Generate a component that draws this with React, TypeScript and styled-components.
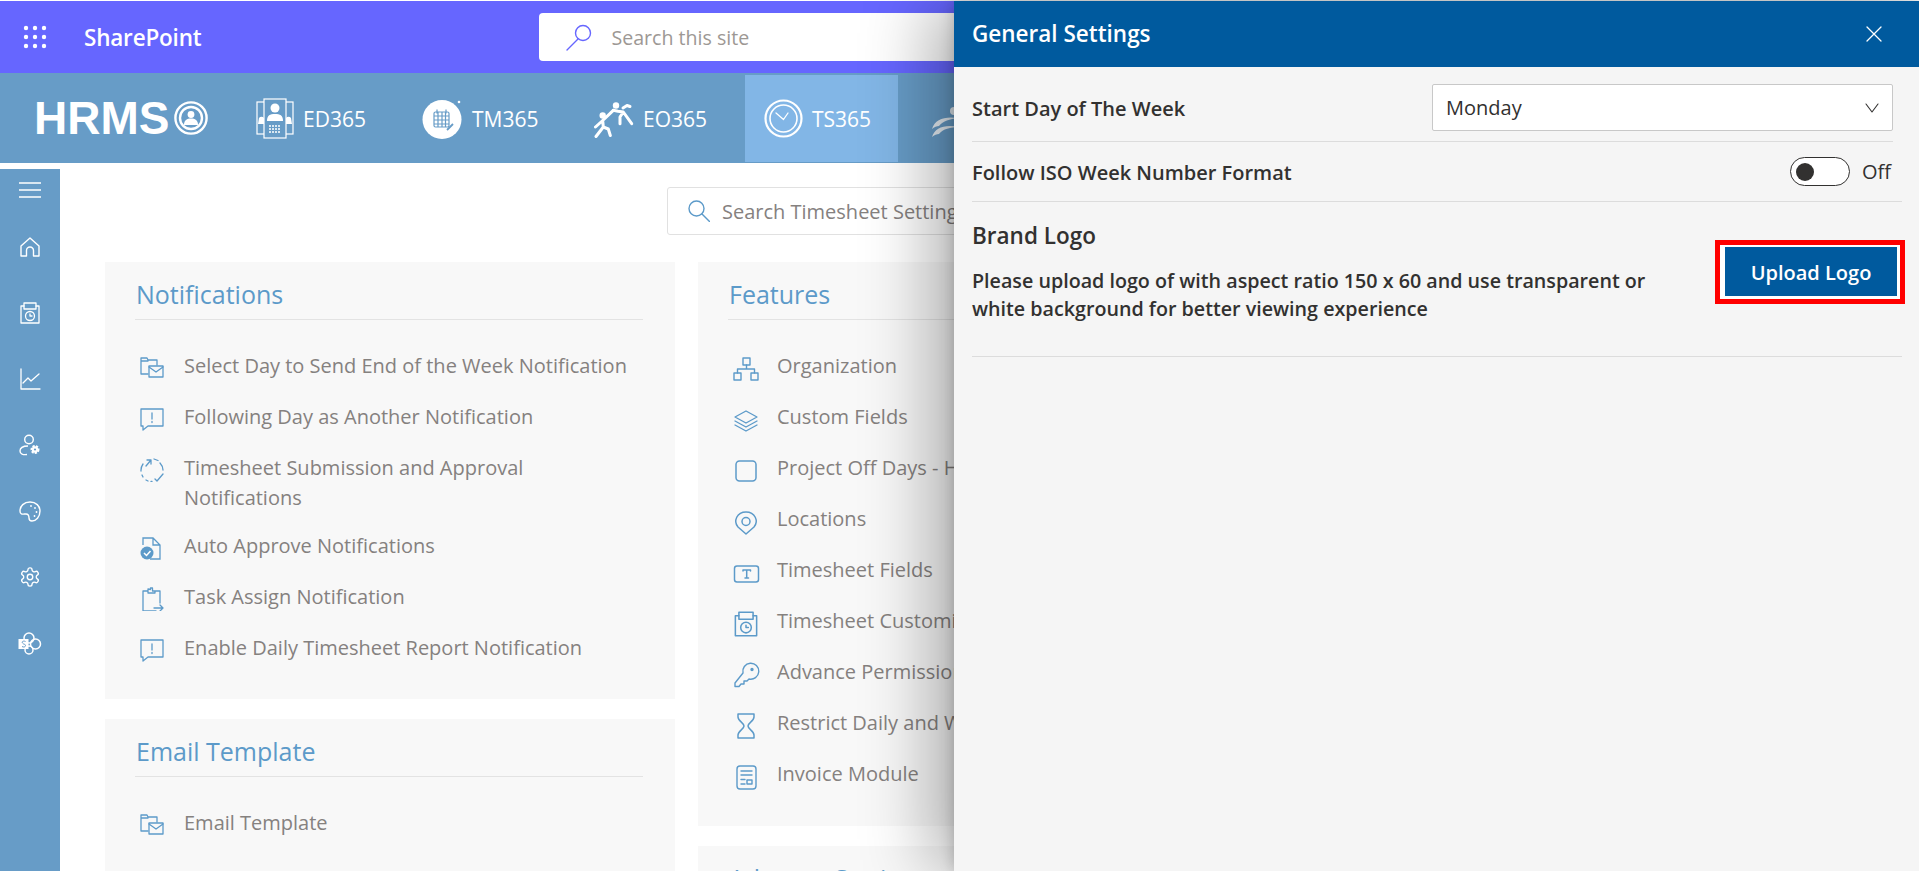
import React from "react";
import styled, { createGlobalStyle } from "styled-components";

const Global = createGlobalStyle`
  html, body { margin: 0; padding: 0; height: 100%; overflow: hidden; background: #fff; }
  body { font-family: "Open Sans", "Liberation Sans", sans-serif; }
  * { box-sizing: border-box; }
`;

const Page = styled.div`
  width: 1919px;
  height: 871px;
  overflow: hidden;
  position: relative;
  padding-top: 1px;
`;
const TopBar = styled.header`
  height: 72px;
  background: #6666ff;
  display: flex;
  align-items: center;
  padding-left: 23px;
  color: #fff;
`;
const Brand = styled.span`
  margin-left: 37px;
  font-size: 22.5px;
  font-weight: 600;
  letter-spacing: -0.2px;
`;
const SiteSearch = styled.div`
  margin-left: 338px;
  width: 600px;
  height: 48px;
  background: #fff;
  border-radius: 4px;
  display: flex;
  align-items: center;
  padding-left: 26px;
  gap: 18px;
  color: #6666ff;
`;
const SiteSearchText = styled.span`
  font-size: 19.6px;
  color: #9d9894;
`;
const NavBar = styled.nav`
  height: 90px;
  background: #679cc7;
  display: flex;
  color: #fff;
`;
const Logo = styled.div`
  width: 237px;
  padding-left: 34px;
  display: flex;
  align-items: center;
  gap: 5px;
`;
const LogoText = styled.span`
  font-family: "Liberation Sans", sans-serif;
  font-weight: 700;
  font-size: 46px;
  line-height: 1;
`;
const Tab = styled.div<{ $w: number; $active?: boolean; $pad?: number }>`
  width: ${(p) => p.$w}px;
  flex: none;
  margin-top: 2px;
  height: 87px;
  padding-left: ${(p) => p.$pad ?? 19}px;
  display: flex;
  align-items: center;
  gap: 9px;
  font-size: 21px;
  background: ${(p) => (p.$active ? "#82b6e6" : "transparent")};
`;
const Body = styled.div`
  margin-top: 6px;
  display: flex;
  height: 702px;
`;
const Sidebar = styled.aside`
  width: 60px;
  flex: none;
  background: #679cc7;
  color: #fff;
  display: flex;
  flex-direction: column;
  align-items: center;
  padding-top: 13px;
  gap: 44px;
`;
const MenuToggle = styled.span`
  display: block;
  margin-bottom: -6px;
`;
const Content = styled.main`
  flex: 1;
  padding: 18px 0 0 45px;
  min-width: 0;
`;
const SearchBox = styled.div`
  margin-left: 562px;
  width: 620px;
  height: 48px;
  border: 1px solid #e1e1e1;
  border-radius: 3px;
  display: flex;
  align-items: center;
  padding-left: 20px;
  gap: 12px;
  color: #5c9ac9;
`;
const SearchText = styled.span`
  font-size: 20px;
  color: #85817f;
  white-space: nowrap;
`;
const Columns = styled.div`
  margin-top: 27px;
  display: flex;
  gap: 23px;
  align-items: flex-start;
`;
const Column = styled.div`
  width: 570px;
  flex: none;
  display: flex;
  flex-direction: column;
  gap: 20px;
`;
const Card = styled.section<{ $h: number }>`
  height: ${(p) => p.$h}px;
  background: #f8f8f8;
  padding: 12px 32px 0 30px;
`;
const CardTitle = styled.h2`
  margin: 0;
  height: 46px;
  border-bottom: 1px solid #e3e3e3;
  padding-left: 1px;
  font-size: 25px;
  font-weight: 400;
  line-height: 40px;
  color: #5c9ac9;
`;
const List = styled.ul`
  list-style: none;
  margin: 20px 0 0;
  padding: 0 0 0 5px;
`;
const Item = styled.li`
  display: flex;
  align-items: flex-start;
  min-height: 51px;
  padding: 11px 0 7px;
  color: #5c9ac9;
`;
const ItemIcon = styled.span`
  width: 44px;
  height: 28px;
  flex: none;
  padding-top: 5px;
`;
const ItemText = styled.span`
  font-size: 20px;
  line-height: 30px;
  color: #85817f;
  white-space: pre-line;
`;

const Drawer = styled.aside`
  position: absolute;
  top: 1px;
  left: 954px;
  right: 0;
  bottom: 0;
  background: #f5f5f5;
  color: #323130;
  box-shadow: -24px 0 64px rgba(0, 0, 0, 0.3), 0 0 14px rgba(0, 0, 0, 0.2);
`;
const DrawerHead = styled.div`
  height: 66px;
  background: #005a9e;
  color: #fff;
  display: flex;
  align-items: center;
  justify-content: space-between;
  padding: 0 37px 0 18px;
`;
const DrawerTitle = styled.h1`
  margin: 0 0 2px;
  font-size: 22.5px;
  font-weight: 600;
`;
const FieldRow = styled.div<{ $h: number; $end: number; $top?: boolean }>`
  margin-left: 18px;
  margin-right: ${(p) => p.$end}px;
  height: ${(p) => p.$h}px;
  border-bottom: 1px solid #dcdcdc;
  display: flex;
  align-items: ${(p) => (p.$top ? "flex-start" : "center")};
  justify-content: space-between;
`;
const FirstRowWrap = styled.div`
  padding-top: 17px;
`;
const FieldLabel = styled.span<{ $tall?: boolean }>`
  font-size: 20px;
  font-weight: 600;
  line-height: ${(p) => (p.$tall ? "50px" : "32px")};
  padding-top: ${(p) => (p.$tall ? "0" : "2px")};
`;
const Select = styled.div`
  width: 461px;
  height: 47px;
  background: #fff;
  border: 1px solid #c8c8c8;
  border-radius: 2px;
  display: flex;
  align-items: center;
  justify-content: space-between;
  padding: 0 12px 0 13px;
  font-size: 20px;
`;
const ToggleWrap = styled.div`
  display: flex;
  align-items: center;
  gap: 12px;
  margin-right: 11px;
  font-size: 20px;
`;
const Toggle = styled.span`
  width: 60px;
  height: 29px;
  background: #fff;
  border: 1px solid #323130;
  border-radius: 15px;
  display: flex;
  align-items: center;
  padding-left: 5px;
`;
const Knob = styled.span`
  width: 18px;
  height: 18px;
  border-radius: 50%;
  background: #323130;
`;
const LogoRow = styled.div`
  margin: 0 17px 0 18px;
  height: 155px;
  border-bottom: 1px solid #dcdcdc;
  display: flex;
  justify-content: space-between;
`;
const LogoInfo = styled.div`
  width: 700px;
  padding-top: 19px;
`;
const LogoTitle = styled.h3`
  margin: 0;
  font-size: 22.5px;
  line-height: 30px;
  font-weight: 600;
`;
const LogoHelp = styled.p`
  margin: 16px 0 0;
  font-size: 19.7px;
  font-weight: 600;
  line-height: 28px;
`;
const Highlight = styled.div`
  margin: 38px -3px 0 0;
  height: 64px;
  width: 190px;
  border: 5px solid #ff0000;
  padding: 2px 3px 3px 5px;
  background: #fff;
  flex: none;
`;
const UploadButton = styled.button`
  width: 100%;
  height: 100%;
  border: 0;
  padding: 2px 0 0;
  background: #005a9e;
  color: #fff;
  font-family: inherit;
  font-size: 20px;
  font-weight: 600;
`;

type SP = { size?: number; h?: number; vb?: string; children: React.ReactNode; sw?: number };
const Svg = ({ size = 24, h, vb = "0 0 24 24", children, sw = 1.5 }: SP) => (
  <svg width={size} height={h ?? size} viewBox={vb} fill="none" stroke="currentColor" strokeWidth={sw} strokeLinecap="round" strokeLinejoin="round" style={{ display: "block", flex: "none" }}>
    {children}
  </svg>
);

const Waffle = () => (
  <svg width="24" height="24" viewBox="0 0 24 24" fill="#fff" style={{ display: "block" }}>
    {[3, 12, 21].flatMap((y) => [3, 12, 21].map((x) => <circle key={`${x}${y}`} cx={x} cy={y} r="2.2" />))}
  </svg>
);
const SiteSearchIcon = () => (
  <Svg size={28} sw={1.4} vb="0 0 28 28"><circle cx="18" cy="10" r="7.5" /><path d="M13 16 2 27" /></Svg>
);
const LogoMark = () => (
  <Svg size={34} sw={2.4} vb="0 0 34 34">
    <circle cx="17" cy="17" r="15.6" />
    <circle cx="17" cy="17" r="11" />
    <circle cx="17" cy="13.5" r="3.4" fill="#fff" stroke="none" />
    <path d="M10 24c0-5 3-6.5 7-6.5s7 1.5 7 6.5z" fill="#fff" stroke="none" />
  </Svg>
);
const EdIcon = () => (
  <svg width="38" height="42" viewBox="0 0 38 42" fill="none" stroke="#fff" strokeWidth="1.2" style={{ display: "block", flex: "none" }}>
    <rect x="1" y="4" width="8" height="32" />
    <rect x="29" y="4" width="8" height="32" />
    <rect x="8" y="1" width="22" height="39" fill="#679cc7" />
    <circle cx="19" cy="10" r="4.5" fill="#fff" stroke="none" />
    <path d="M11 23c0-6 3-7 8-7s8 1 8 7z" fill="#fff" stroke="none" />
    <path d="M3 20a3 3 0 0 1 5 0v6H2zM30 20a3 3 0 0 1 5 0l1 6h-6z" fill="#fff" stroke="none" />
    <path d="M13 28h12M13 31h12M13 34h12" strokeDasharray="2 1" stroke="#fff" strokeWidth="1.4" />
  </svg>
);
const TmIcon = () => (
  <svg width="41" height="40" viewBox="0 0 41 40" style={{ display: "block", flex: "none" }}>
    <circle cx="20" cy="20.5" r="19.5" fill="#fff" />
    <circle cx="37" cy="3" r="1.3" fill="#fff" />
    <g fill="none" stroke="#679cc7" strokeWidth="1.2">
      <rect x="12" y="13" width="15" height="15" rx="1.5" />
      <path d="M12 17h15M12 21h15M12 25h15M16 13v15M20 13v15M23.5 13v15M15 10.5v4M24 10.5v4" />
      <path d="m25 31 6-6" strokeWidth="1.8" />
    </g>
  </svg>
);
const EoIcon = () => (
  <svg width="40" height="38" viewBox="0 0 40 38" style={{ display: "block", flex: "none" }} fill="#fff">
    <circle cx="8.7" cy="15.5" r="3.2" />
    <circle cx="22" cy="5.5" r="3.2" />
    <g fill="none" stroke="#fff" strokeWidth="3" strokeLinecap="round" strokeLinejoin="round">
      <path d="M8.7 20.5 9.300 27 2 36.500M9.300 27l5 2 2 6.500M1.500 27l7.200-6.500L19.300 10.300" />
      <path d="m19.300 10.300 4.700 1 5.300.7 8.400 11.700M29.300 12l-3.300 5v6.700M29 8l4-2.500 3 1" />
    </g>
  </svg>
);
const TsIcon = () => (
  <Svg size={39} sw={2.2} vb="0 0 39 39">
    <circle cx="19.5" cy="19.5" r="18" />
    <circle cx="19.5" cy="19.5" r="13.5" strokeWidth="1.6" />
    <path d="m12 14 7.500 6.500L24 14" strokeWidth="1.3" />
  </Svg>
);
const WaveIcon = () => (
  <svg width="40" height="34" viewBox="0 0 40 34" fill="#fff" opacity="0.85" style={{ display: "block", flex: "none", marginTop: "6px" }}>
    <circle cx="22" cy="6" r="4" />
    <path d="M0 24C3 14 13 11 26 13c-8 1-15 3-19 8-2 0-5 1-7 3z" />
    <path d="M0 32C3 22 13 19 28 22c-10 0-17 2-21 7-2 0-5 1-7 3z" />
  </svg>
);

const Hamburger = () => <Svg size={22} h={16} vb="0 0 22 16" sw={1.3}><path d="M0 1h22M0 8h22M0 15h22" /></Svg>;
const HomeI = () => <Svg size={22} vb="0 0 22 22" sw={1.4}><path d="M2 20V10l9-8 9 8v10h-5.500v-5.500a3.500 3.500 0 0 0-7 0V20z" /></Svg>;
const SaveClockI = ({ s = 22 }: { s?: number }) => (
  <Svg size={s} vb="0 0 22 22" sw={1.3}>
    <path d="M5 4H2v17h18V4h-3" />
    <rect x="5" y="1" width="12" height="6" />
    <circle cx="11" cy="14" r="4.5" />
    <path d="M11 12v2h2" />
  </Svg>
);
const ChartI = () => <Svg size={22} vb="0 0 22 22" sw={1.3}><path d="M2 1v20h19M4 15l5-5 3 3 8-7" /></Svg>;
const UserGearI = () => (
  <svg width="22" height="22" viewBox="0 0 22 22" style={{ display: "block", flex: "none" }} fill="none" stroke="#fff" strokeWidth="1.4">
    <circle cx="10" cy="5.5" r="4.3" />
    <path d="M9 12c-5 0-8 2-8 5s3 4 7 3.500" />
    <circle cx="16" cy="15.5" r="3.2" fill="#fff" strokeWidth="2.6" strokeDasharray="2 1.1" />
    <circle cx="16" cy="15.5" r="1.1" fill="#679cc7" stroke="none" />
  </svg>
);
const PaletteI = () => (
  <Svg size={22} vb="0 0 22 22" sw={1.4}>
    <path d="M11 2c6 0 10 4 10 9 0 6-4 10-8 10-2 0-3-1-3-3 0-3-1-4-3-4-3 0-6 1-6-3C1 6 5 2 11 2z" />
    <path d="M12 6h.01M16 8h.01M17.500 12h.01M15.500 16h.01" strokeWidth="1.8" />
  </Svg>
);
const GearI = () => (
  <Svg size={22} vb="0 0 24 24" sw={1.5}>
    <path d="M12.220 2h-.44a2 2 0 0 0-2 2v.180a2 2 0 0 1-1 1.730l-.430.250a2 2 0 0 1-2 0l-.150-.080a2 2 0 0 0-2.730.730l-.220.380a2 2 0 0 0 .730 2.730l.150.100a2 2 0 0 1 1 1.720v.510a2 2 0 0 1-1 1.740l-.150.090a2 2 0 0 0-.730 2.730l.220.380a2 2 0 0 0 2.730.730l.150-.080a2 2 0 0 1 2 0l.430.250a2 2 0 0 1 1 1.730V20a2 2 0 0 0 2 2h.440a2 2 0 0 0 2-2v-.180a2 2 0 0 1 1-1.730l.430-.250a2 2 0 0 1 2 0l.150.080a2 2 0 0 0 2.730-.730l.220-.390a2 2 0 0 0-.730-2.730l-.150-.080a2 2 0 0 1-1-1.740v-.500a2 2 0 0 1 1-1.740l.150-.090a2 2 0 0 0 .730-2.730l-.220-.380a2 2 0 0 0-2.730-.730l-.150.080a2 2 0 0 1-2 0l-.430-.250a2 2 0 0 1-1-1.730V4a2 2 0 0 0-2-2z" />
    <circle cx="12" cy="12" r="3" />
  </Svg>
);
const SharePointI = () => (
  <svg width="24" height="23" viewBox="0 0 24 23" style={{ display: "block", flex: "none" }} fill="none" stroke="#fff" strokeWidth="1.5">
    <circle cx="11" cy="6" r="5" />
    <circle cx="17.5" cy="12" r="5" />
    <circle cx="11" cy="18" r="4" />
    <rect x="0.5" y="7" width="10" height="10" fill="#fff" stroke="none" />
    <path d="M7.500 9.500c-2-1-4 0-3 1.500s3 1 3 2.500-2 2-3.500 1" stroke="#679cc7" strokeWidth="1" />
  </svg>
);

const FolderMail = () => (
  <Svg size={24} vb="0 0 24 24" sw={1.3}>
    <path d="M8 18H1V2h6l1 2h9v5M1 5h7" />
    <rect x="9" y="10" width="14" height="11" />
    <path d="m9 11 7 5 7-5" />
  </Svg>
);
const Alert = () => (
  <Svg size={24} vb="0 0 24 24" sw={1.3}>
    <path d="M1 2h22v17H8l-5 4v-4H1z" />
    <path d="M12 6v6M12 14.500v1" />
  </Svg>
);
const Cycle = () => (
  <Svg size={24} vb="0 0 24 24" sw={1.3}>
    <path d="M3 6a11 11 0 0 0-2 7M6 8l5-6M7 2h4v4M14 1l4 1.500M20 5a11 11 0 0 1 3 7M2 17l1 2M6 22l2 1M11 23.500h1M15 21l2 2 6-7" />
  </Svg>
);
const DocCheck = () => (
  <svg width="24" height="24" viewBox="0 0 24 24" style={{ display: "block" }} fill="none" stroke="currentColor" strokeWidth="1.3">
    <path d="M3 9V2h10l7 7v14H10M13 2v7h7" />
    <circle cx="7" cy="17" r="6.500" fill="currentColor" stroke="none" />
    <path d="m4 17 2.500 2.500L10.500 15" stroke="#fff" strokeWidth="1.5" />
  </svg>
);
const ClipArrow = () => (
  <Svg size={24} vb="0 0 24 24" sw={1.3}>
    <path d="M8 4H3v20h13M15 4h5v12M8 2v4h7V4h-2.500V1h-2v1.500z" />
    <path d="M14 21h9M20 18l3 3-3 3" />
  </Svg>
);
const Org = () => (
  <Svg size={26} vb="0 0 26 26" sw={1.4}>
    <rect x="10" y="2" width="7" height="7" />
    <rect x="1" y="17" width="7" height="7" />
    <rect x="18" y="17" width="7" height="7" />
    <path d="M13.500 9v4M4.500 17v-4h17v4" />
  </Svg>
);
const Layers = () => (
  <Svg size={26} vb="0 0 26 26" sw={1.3}>
    <path d="m13 4 11 6-11 6-11-6zM2 14l11 6 11-6M2 18l11 6 11-6" />
  </Svg>
);
const Square = () => <Svg size={26} vb="0 0 26 26" sw={1.5}><rect x="3" y="3" width="20" height="20" rx="3.500" /></Svg>;
const Pin = () => (
  <Svg size={26} vb="0 0 26 26" sw={1.5}>
    <path d="M13 25 5 18c-5-6-1-15 8-15s13 9 8 15z" />
    <circle cx="13" cy="12.500" r="4" />
  </Svg>
);
const FieldT = () => (
  <Svg size={28} vb="0 0 28 28" sw={1.5}>
    <rect x="1.500" y="6" width="24" height="16" rx="2.500" />
    <path d="M10 11v-1h7.500v1M13.700 10v8M12 18h3.500" />
  </Svg>
);
const KeyI = () => (
  <Svg size={27} vb="0 0 27 27" sw={1.4}>
    <path d="M10 11a8 8 0 1 1 6 6l-2 2h-3v3H8l-2 2.500H2V21z" />
    <circle cx="19" cy="7.500" r="1" fill="currentColor" />
  </Svg>
);
const Hourglass = () => (
  <Svg size={26} vb="0 0 26 26" sw={1.5}>
    <path d="M5 1h16v3c0 4-6 6-6 9s6 5 6 9v3H5v-3c0-4 6-6 6-9S5 8 5 4z" />
  </Svg>
);
const Invoice = () => (
  <Svg size={26} vb="0 0 26 26" sw={1.4}>
    <rect x="4" y="2" width="19" height="23" rx="3" />
    <path d="M8 7h11M8 11h11M8 15.500h4M8 20h4" />
    <rect x="14" y="16" width="5" height="4" />
  </Svg>
);
const SmallSearch = () => <Svg size={22} vb="0 0 22 22" sw={1.4}><circle cx="8.500" cy="8.500" r="7.500" /><path d="m14 14 7.500 7.500" /></Svg>;
const Chevron = () => <Svg size={16} h={12} vb="0 0 16 12" sw={1.1}><path d="m2 2 6 8 6-8" /></Svg>;
const CloseI = () => <Svg size={16} vb="0 0 16 16" sw={1.3}><path d="m1 1 14 14M15 1 1 15" /></Svg>;

const notif: [React.ReactNode, string][] = [
  [<FolderMail />, "Select Day to Send End of the Week Notification"],
  [<Alert />, "Following Day as Another Notification"],
  [<Cycle />, "Timesheet Submission and Approval\nNotifications"],
  [<DocCheck />, "Auto Approve Notifications"],
  [<ClipArrow />, "Task Assign Notification"],
  [<Alert />, "Enable Daily Timesheet Report Notification"],
];
const features: [React.ReactNode, string][] = [
  [<Org />, "Organization"],
  [<Layers />, "Custom Fields"],
  [<Square />, "Project Off Days - Holidays"],
  [<Pin />, "Locations"],
  [<FieldT />, "Timesheet Fields"],
  [<SaveClockI s={26} />, "Timesheet Customization"],
  [<KeyI />, "Advance Permissions"],
  [<Hourglass />, "Restrict Daily and Weekly Hours"],
  [<Invoice />, "Invoice Module"],
];

const Rows = ({ items }: { items: [React.ReactNode, string][] }) => (
  <List>
    {items.map(([icon, text]) => (
      <Item key={text}>
        <ItemIcon>{icon}</ItemIcon>
        <ItemText>{text}</ItemText>
      </Item>
    ))}
  </List>
);

export default function App() {
  return (
    <Page>
      <Global />
      <TopBar>
        <Waffle />
        <Brand>SharePoint</Brand>
        <SiteSearch>
          <SiteSearchIcon />
          <SiteSearchText>Search this site</SiteSearchText>
        </SiteSearch>
      </TopBar>
      <NavBar>
        <Logo>
          <LogoText>HRMS</LogoText>
          <LogoMark />
        </Logo>
        <Tab $w={166}><EdIcon />ED365</Tab>
        <Tab $w={172}><TmIcon />TM365</Tab>
        <Tab $w={170}><EoIcon />EO365</Tab>
        <Tab $w={153} $active><TsIcon />TS365</Tab>
        <Tab $w={120} $pad={34}><WaveIcon /></Tab>
      </NavBar>
      <Body>
        <Sidebar>
          <MenuToggle><Hamburger /></MenuToggle>
          <HomeI />
          <SaveClockI />
          <ChartI />
          <UserGearI />
          <PaletteI />
          <GearI />
          <SharePointI />
        </Sidebar>
        <Content>
          <SearchBox>
            <SmallSearch />
            <SearchText>Search Timesheet Settings</SearchText>
          </SearchBox>
          <Columns>
            <Column>
              <Card $h={437}>
                <CardTitle>Notifications</CardTitle>
                <Rows items={notif} />
              </Card>
              <Card $h={200}>
                <CardTitle>Email Template</CardTitle>
                <Rows items={[[<FolderMail />, "Email Template"]]} />
              </Card>
            </Column>
            <Column>
              <Card $h={564}>
                <CardTitle>Features</CardTitle>
                <Rows items={features} />
              </Card>
              <Card $h={100}>
                <CardTitle>Advance Settings</CardTitle>
              </Card>
            </Column>
          </Columns>
        </Content>
      </Body>
      <Drawer>
        <DrawerHead>
          <DrawerTitle>General Settings</DrawerTitle>
          <CloseI />
        </DrawerHead>
        <FirstRowWrap>
          <FieldRow $h={58} $end={26} $top>
            <FieldLabel $tall>Start Day of The Week</FieldLabel>
            <Select>
              Monday
              <Chevron />
            </Select>
          </FieldRow>
        </FirstRowWrap>
        <FieldRow $h={60} $end={17}>
          <FieldLabel>Follow ISO Week Number Format</FieldLabel>
          <ToggleWrap>
            <Toggle><Knob /></Toggle>
            Off
          </ToggleWrap>
        </FieldRow>
        <LogoRow>
          <LogoInfo>
            <LogoTitle>Brand Logo</LogoTitle>
            <LogoHelp>
              Please upload logo of with aspect ratio 150 x 60 and use transparent or white background for better viewing experience
            </LogoHelp>
          </LogoInfo>
          <Highlight>
            <UploadButton>Upload Logo</UploadButton>
          </Highlight>
        </LogoRow>
      </Drawer>
    </Page>
  );
}
